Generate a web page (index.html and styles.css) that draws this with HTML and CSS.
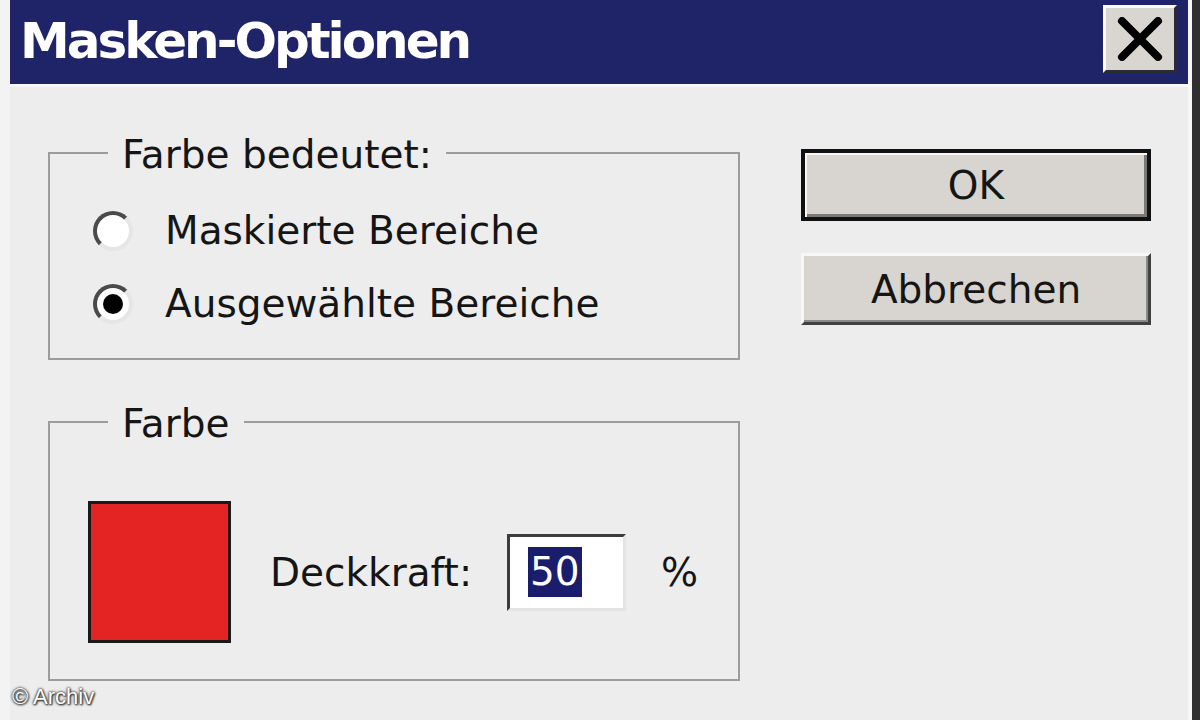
FILE: index.html
```html
<!DOCTYPE html>
<html lang="de">
<head>
<meta charset="utf-8">
<title>Masken-Optionen</title>
<link rel="stylesheet" href="styles.css">
</head>
<body>
<div class="window">
  <div class="frame">
    <div class="titlebar">
      <span class="title">Masken-Optionen</span>
      <button class="close" aria-label="Schließen">
        <svg width="48" height="44" viewBox="0 0 48 44"><path d="M6 4 L42 40 M42 4 L6 40" stroke="#000" stroke-width="8" stroke-linecap="round"/></svg>
      </button>
    </div>
    <div class="content">
      <div class="left">
        <fieldset class="group">
          <legend>Farbe bedeutet:</legend>
          <div class="group-meaning">
            <label class="radio-row"><span class="radio"></span><span>Maskierte Bereiche</span></label>
            <label class="radio-row"><span class="radio checked"></span><span>Ausgewählte Bereiche</span></label>
          </div>
        </fieldset>
        <fieldset class="group">
          <legend>Farbe</legend>
          <div class="color-row">
            <div class="swatch"></div>
            <span class="label">Deckkraft:</span>
            <div class="input"><span class="sel">50</span></div>
            <span class="pct">%</span>
          </div>
        </fieldset>
      </div>
      <div class="right">
        <button class="btn default">OK</button>
        <button class="btn">Abbrechen</button>
      </div>
    </div>
  </div>
  <div class="watermark">© Archiv</div>
</div>
</body>
</html>
```

FILE: styles.css
```css
* { box-sizing: border-box; }
html, body {
  margin: 0;
  padding: 0;
  background: #ededed;
}
body {
  width: 1200px;
  height: 720px;
  overflow: hidden;
  font-family: "DejaVu Sans", "Liberation Sans", sans-serif;
  color: #151515;
}
.window {
  position: relative;
  width: 1200px;
  height: 720px;
  border-left: 10px solid #f3f3f3;
  border-right: 8px solid #303030;
  background: #ededed;
}
.frame {
  height: 100%;
  border-right: 4px solid #f6f6f6;
  display: flex;
  flex-direction: column;
}
.titlebar {
  height: 87px;
  background: #1f2367;
  border-bottom: 3px solid #f7f7fb;
  display: flex;
  align-items: flex-start;
  justify-content: space-between;
  padding: 0 11px 0 10px;
  flex: none;
}
.title {
  color: #fff;
  font-weight: bold;
  font-size: 50px;
  letter-spacing: -3px;
  line-height: 84px;
  margin-top: -1px;
}
.close {
  margin-top: 5px;
  width: 74px;
  height: 68px;
  padding: 0;
  background: #d9d5d0;
  border: 3px solid;
  border-color: #fafafa #2a2a3a #2a2a3a #fafafa;
  display: flex;
  align-items: center;
  justify-content: center;
}
.content {
  display: grid;
  grid-template-columns: 692px 350px;
  column-gap: 61px;
  padding-left: 38px;
  font-size: 39px;
}
.left {
  display: flex;
  flex-direction: column;
  padding-top: 40px;
  gap: 36px;
}
.group {
  margin: 0;
  border: 2px solid #9c9c9c;
  padding: 0;
  min-width: 0;
}
.group legend {
  margin-left: 58px;
  padding: 5px 14px 0;
  line-height: 46px;
  font-size: 39px;
}
.group-meaning {
  padding: 16px 0 18px 43px;
}
.radio-row {
  display: flex;
  align-items: center;
  height: 73px;
  gap: 32px;
}
.radio {
  width: 40px;
  height: 40px;
  border-radius: 50%;
  background: #fff;
  border: 4px solid;
  border-color: #4a4a4a #e6e6e6 #e6e6e6 #4a4a4a;
  display: flex;
  align-items: center;
  justify-content: center;
  flex: none;
}
.radio.checked::after {
  content: "";
  width: 20px;
  height: 20px;
  border-radius: 50%;
  background: #000;
}
.color-row {
  display: flex;
  align-items: center;
  padding: 54px 0 36px 38px;
}
.swatch {
  width: 143px;
  height: 142px;
  background: #e42323;
  border: 3px solid #1a1a1a;
  flex: none;
}
.label {
  margin-left: 39px;
}
.input {
  margin-left: 35px;
  width: 119px;
  height: 77px;
  background: #fff;
  border: 3px solid;
  border-color: #3c3c3c #e4e4e4 #e4e4e4 #3c3c3c;
  display: flex;
  align-items: center;
  padding-left: 18px;
}
.sel {
  background: #1a1d6c;
  color: #fff;
  line-height: 50px;
  padding: 0 2px;
}
.pct {
  margin-left: 35px;
}
.right {
  display: flex;
  flex-direction: column;
  gap: 32px;
  padding-top: 62px;
}
.btn {
  width: 350px;
  height: 72px;
  background: #d8d4cf;
  font-family: inherit;
  font-size: 39px;
  color: #151515;
  padding: 0;
  border: 3px solid;
  border-color: #f7f7f7 #404040 #404040 #f7f7f7;
  box-shadow: inset -2px -2px 0 #8a8a8a;
}
.btn.default {
  border: 4px solid #111;
  box-shadow: inset 2px 2px 0 #f7f7f7, inset -3px -3px 0 #7a7a7a;
}
.watermark {
  position: absolute;
  left: 2px;
  bottom: 10px;
  font-family: "Liberation Sans", Arial, sans-serif;
  font-size: 22px;
  color: #fff;
  text-shadow: 0 0 2px #333, 0 0 3px #333, 1px 1px 2px #222;
}
```
